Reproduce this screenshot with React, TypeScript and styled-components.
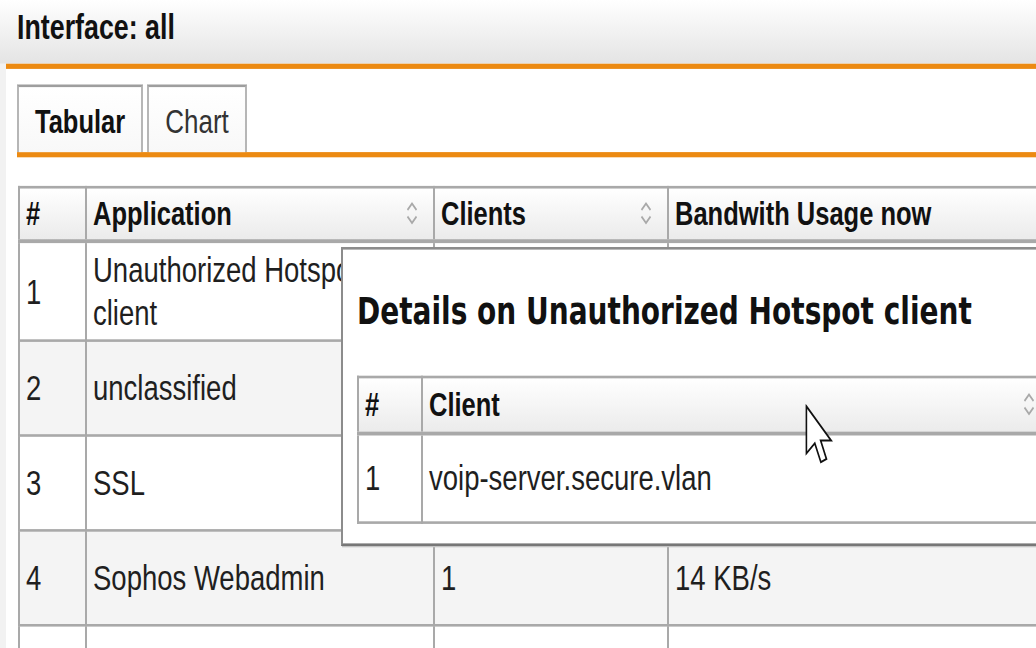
import React from "react";
import styled, { createGlobalStyle } from "styled-components";

const Global = createGlobalStyle`
  html {
    overflow: hidden;
    background: #f2f2f2;
  }
  body {
    margin: 0;
    padding: 0;
    width: 1036px;
    height: 648px;
    background: #f2f2f2;
    font-family: "Liberation Sans", Arial, sans-serif;
    color: #1a1a1a;
  }
`;

/* The reference is stretched vertically (~1.3x): the whole stage is laid out
   in flow and then scaled on the Y axis. */
const Stage = styled.div`
  position: relative;
  width: 1036px;
  height: 499px;
  overflow: hidden;
  transform: scaleY(1.3);
  transform-origin: 0 0;
  display: flex;
  flex-direction: column;
  background: #f2f2f2;
`;

const Header = styled.header`
  flex: none;
  height: 49px;
  box-sizing: border-box;
  display: flex;
  align-items: center;
  padding: 0 0 6px 17px;
  background: linear-gradient(#ffffff 0%, #f4f4f4 40%, #e4e4e4 100%);
`;

const Heading = styled.h1`
  margin: 0;
  font-size: 26.8px;
  font-weight: 700;
  color: #111;
`;

const Body = styled.div`
  flex: 1;
  display: flex;
  min-height: 0;
`;

const Gutter = styled.div`
  flex: none;
  width: 6px;
  background: #f2f2f2;
`;

const Content = styled.main`
  flex: 1;
  min-width: 0;
  overflow: hidden;
  background: #fff;
  border-top: 4px solid #ec8a12;
  padding: 11.5px 0 0 11px;
`;

const TabBar = styled.div`
  display: flex;
  align-items: flex-end;
  gap: 4px;
  border-bottom: 4.6px solid #ec8a12;
`;

const Tab = styled.div<{ $active?: boolean }>`
  height: 52px;
  box-sizing: border-box;
  display: flex;
  align-items: center;
  padding: 4px 16px 0;
  border: 2px solid #b6b6b6;
  border-top-color: #9e9e9e;
  border-bottom: none;
  background: linear-gradient(#ffffff, #f8f8f8);
  font-size: ${(p) => (p.$active ? "25.5px" : "26px")};
  font-weight: ${(p) => (p.$active ? 700 : 400)};
  color: ${(p) => (p.$active ? "#111" : "#333")};
`;

const Grid = styled.table<{ $width: number }>`
  border-collapse: collapse;
  table-layout: fixed;
  width: ${(p) => p.$width}px;
`;

const MainGrid = styled(Grid)`
  margin: 22px 0 0 1px;
`;

const HeadCell = styled.th<{ $h: number }>`
  height: ${(p) => p.$h}px;
  box-sizing: border-box;
  padding: 0 15px 0 6px;
  text-align: left;
  vertical-align: middle;
  font-size: 25.5px;
  font-weight: 700;
  color: #111;
  background: linear-gradient(#ffffff, #ebebeb);
  border: 2px solid #a9a9a9;
  border-bottom-width: 3px;
  white-space: nowrap;
`;

const HeadInner = styled.div`
  display: flex;
  align-items: center;
  justify-content: space-between;
`;

const Row = styled.tr<{ $alt?: boolean }>`
  background: ${(p) => (p.$alt ? "#f4f4f4" : "#ffffff")};
`;

const Cell = styled.td<{ $h: number }>`
  height: ${(p) => p.$h}px;
  box-sizing: border-box;
  padding: 4px 6px;
  vertical-align: middle;
  font-size: 27.5px;
  line-height: 33px;
  color: #1f1f1f;
  border: 2px solid #a9a9a9;
`;

const Popup = styled.section`
  position: absolute;
  left: 341px;
  top: 190px;
  width: 730px;
  box-sizing: border-box;
  padding: 31px 14px 15px;
  background: #fff;
  border: 2px solid #8c8c8c;
  border-bottom-color: #777;
  box-shadow: 1px 1px 0 #c4c4c4;
`;

const PopupTitle = styled.h2`
  margin: 0 0 32px;
  font-family: "DejaVu Sans", "Liberation Sans", sans-serif;
  font-size: 28px;
  line-height: 34px;
  font-weight: 700;
  color: #111;
  white-space: nowrap;
`;

const Cursor = styled.svg`
  position: absolute;
  left: 805px;
  top: 311px;
  width: 28px;
  height: 46px;
`;

const SortIcon = () => (
  <svg width="12" height="20" viewBox="0 0 12 20" style={{ flex: "none" }}>
    <polyline points="1.5,7.5 6,2.5 10.5,7.5" fill="none" stroke="#a9a9a9" strokeWidth="1.6" />
    <polyline points="1.5,12.5 6,17.5 10.5,12.5" fill="none" stroke="#a9a9a9" strokeWidth="1.6" />
  </svg>
);

/* Cells hidden under the details popup stay empty, as in the reference. */
const rows = [
  { n: "1", app: "Unauthorized Hotspot client", clients: "", bw: "" },
  { n: "2", app: "unclassified", clients: "", bw: "" },
  { n: "3", app: "SSL", clients: "", bw: "" },
  { n: "4", app: "Sophos Webadmin", clients: "1", bw: "14 KB/s" },
  { n: "", app: "", clients: "", bw: "" },
];

export default function App() {
  return (
    <>
      <Global />
      <Stage>
        <Header>
          <Heading>Interface: all</Heading>
        </Header>
        <Body>
          <Gutter />
          <Content>
            <TabBar>
              <Tab $active>Tabular</Tab>
              <Tab>Chart</Tab>
            </TabBar>
            <MainGrid $width={1100}>
              <colgroup>
                <col style={{ width: 67 }} />
                <col style={{ width: 348 }} />
                <col style={{ width: 234 }} />
                <col style={{ width: 451 }} />
              </colgroup>
              <thead>
                <tr>
                  <HeadCell $h={42}>#</HeadCell>
                  <HeadCell $h={42}>
                    <HeadInner>
                      <span>Application</span>
                      <SortIcon />
                    </HeadInner>
                  </HeadCell>
                  <HeadCell $h={42}>
                    <HeadInner>
                      <span>Clients</span>
                      <SortIcon />
                    </HeadInner>
                  </HeadCell>
                  <HeadCell $h={42}>Bandwith Usage now</HeadCell>
                </tr>
              </thead>
              <tbody>
                {rows.map((r, i) => (
                  <Row key={i} $alt={i % 2 === 1}>
                    <Cell $h={73}>{r.n}</Cell>
                    <Cell $h={73}>{r.app}</Cell>
                    <Cell $h={73}>{r.clients}</Cell>
                    <Cell $h={73}>{r.bw}</Cell>
                  </Row>
                ))}
              </tbody>
            </MainGrid>
          </Content>
        </Body>

        <Popup>
          <PopupTitle>Details on Unauthorized Hotspot client</PopupTitle>
          <Grid $width={693}>
            <colgroup>
              <col style={{ width: 64 }} />
              <col style={{ width: 629 }} />
            </colgroup>
            <thead>
              <tr>
                <HeadCell $h={43}>#</HeadCell>
                <HeadCell $h={43}>
                  <HeadInner>
                    <span>Client</span>
                    <SortIcon />
                  </HeadInner>
                </HeadCell>
              </tr>
            </thead>
            <tbody>
              <Row>
                <Cell $h={69}>1</Cell>
                <Cell $h={69}>voip-server.secure.vlan</Cell>
              </Row>
            </tbody>
          </Grid>
        </Popup>

        <Cursor viewBox="0 0 12 19" preserveAspectRatio="none">
          <path
            d="M0.6,0.6 V15.6 L4.2,12.4 L6.8,18.4 L9.2,17.4 L6.7,11.5 H11.2 Z"
            fill="#fff"
            stroke="#111"
            strokeWidth="1.6"
            vectorEffect="non-scaling-stroke"
            strokeLinejoin="miter"
          />
        </Cursor>
      </Stage>
    </>
  );
}
